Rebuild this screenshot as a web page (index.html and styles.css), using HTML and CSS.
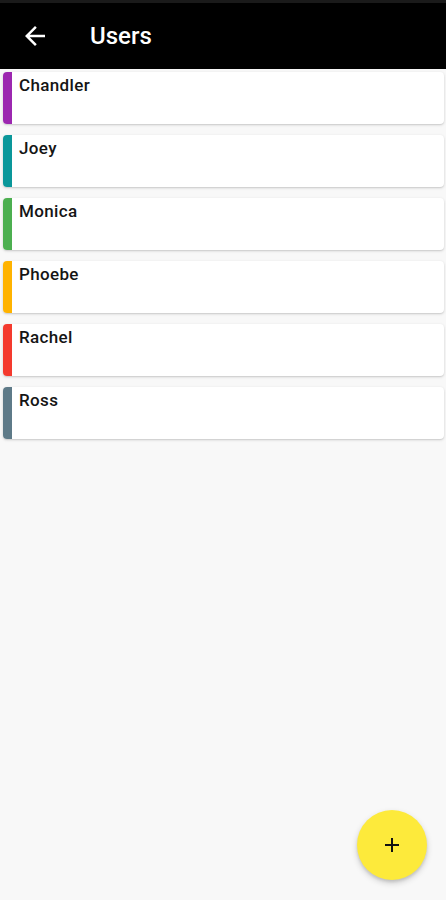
FILE: index.html
```html
<!DOCTYPE html>
<html>
<head>
<meta charset="utf-8">
<link rel="stylesheet" href="styles.css">
</head>
<body>
<header class="appbar">
  <svg class="back" viewBox="0 0 24 24" width="30" height="30"><path fill="#fff" d="M20 11H7.83l5.59-5.59L12 4l-8 8 8 8 1.41-1.41L7.83 13H20v-2z"/></svg>
  <h1 class="title">Users</h1>
</header>
<main class="list">
  <div class="card"><span class="bar purple"></span><span class="name">Chandler</span></div>
  <div class="card"><span class="bar teal"></span><span class="name">Joey</span></div>
  <div class="card"><span class="bar green"></span><span class="name">Monica</span></div>
  <div class="card"><span class="bar amber"></span><span class="name">Phoebe</span></div>
  <div class="card"><span class="bar red"></span><span class="name">Rachel</span></div>
  <div class="card"><span class="bar grey"></span><span class="name">Ross</span></div>
</main>
<button class="fab" aria-label="Add"><svg viewBox="0 0 24 24" width="24" height="24"><path fill="#111" d="M19 13h-6v6h-2v-6H5v-2h6V5h2v6h6v2z"/></svg></button>
</body>
</html>
```
FILE: styles.css
```css
html, body {
  margin: 0;
  padding: 0;
  height: 100%;
}
body {
  background: #f8f8f8;
  font-family: Roboto, "Noto Sans", sans-serif;
  overflow: hidden;
}
.appbar {
  height: 69px;
  background: #000;
  border-top: 3px solid #1a1a1a;
  box-sizing: border-box;
  display: flex;
  align-items: center;
  padding-left: 20px;
}
.back {
  display: block;
}
.title {
  margin: 0 0 0 40px;
  color: #fff;
  font-size: 24px;
  font-weight: 500;
}
.list {
  display: flex;
  flex-direction: column;
  gap: 11px;
  padding: 3px 2px 0 3px;
}
.card {
  height: 52px;
  background: #fff;
  border-radius: 4px;
  box-shadow: 0 1px 3px rgba(0,0,0,0.16), 0 1px 1px rgba(0,0,0,0.06);
  display: flex;
  overflow: hidden;
}
.bar {
  width: 9px;
  flex: none;
}
.purple { background: #9c27b0; }
.teal { background: #0a979a; }
.green { background: #4caf50; }
.amber { background: #ffb300; }
.red { background: #f43a2e; }
.grey { background: #5e7a88; }
.name {
  padding: 3px 0 0 7px;
  font-size: 17px;
  font-weight: 500;
  letter-spacing: 0.35px;
  color: #151515;
  line-height: 20px;
}
.fab {
  position: fixed;
  left: 357px;
  top: 810px;
  width: 70px;
  height: 70px;
  border-radius: 50%;
  border: none;
  background: #fdea3b;
  box-shadow: 0 3px 6px rgba(0,0,0,0.18), 0 2px 3px rgba(0,0,0,0.1);
  display: flex;
  align-items: center;
  justify-content: center;
  padding: 0;
}
```
